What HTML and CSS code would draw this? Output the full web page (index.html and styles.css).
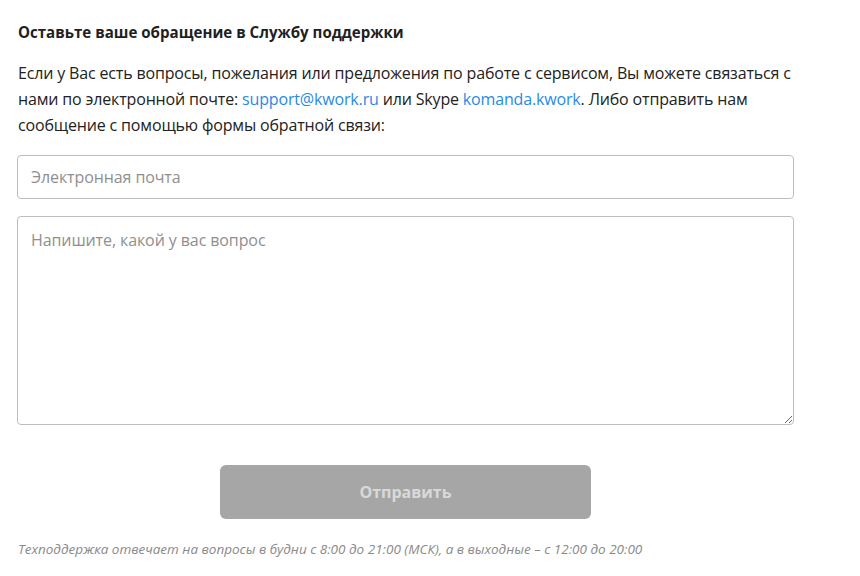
FILE: index.html
```
<!DOCTYPE html>
<html lang="ru">
<head>
<meta charset="utf-8">
<link rel="stylesheet" href="styles.css">
</head>
<body>
<div class="support">
  <h1 class="title">Оставьте ваше обращение в Службу поддержки</h1>
  <p class="intro">Если у Вас есть вопросы, пожелания или предложения по работе с сервисом, Вы можете связаться с нами по электронной почте: <a class="link" href="#">support@kwork.ru</a> или Skype <a class="link" href="#">komanda.kwork</a>. Либо отправить нам сообщение с помощью формы обратной связи:</p>
  <form class="form">
    <input class="field" type="text" placeholder="Электронная почта">
    <textarea class="field area" placeholder="Напишите, какой у вас вопрос"></textarea>
    <div class="actions">
      <button class="submit" type="button" disabled>Отправить</button>
    </div>
  </form>
  <p class="note">Техподдержка отвечает на вопросы в будни с 8:00 до 21:00 (МСК), а в выходные – с 12:00 до 20:00</p>
</div>
</body>
</html>
```
FILE: styles.css
```
html, body {
  margin: 0;
  padding: 0;
  background: #fff;
}
body {
  font-family: "Open Sans", "Noto Sans", sans-serif;
  color: #222;
}
.support {
  width: 777px;
  padding: 22px 0 0 17px;
}
.title {
  margin: 0 0 0 1px;
  font-size: 15.1px;
  line-height: 20px;
  font-weight: 700;
  color: #1f1f1f;
}
.intro {
  margin: 18px 0 0 1px;
  font-size: 16px;
  line-height: 26px;
  letter-spacing: -0.16px;
  color: #222;
}
.link {
  color: #2a8ae6;
  text-decoration: none;
}
.form {
  margin-top: 17px;
  display: flex;
  flex-direction: column;
  gap: 17px;
}
.field {
  box-sizing: border-box;
  width: 777px;
  height: 44px;
  margin: 0;
  border: 1px solid #bdbdbd;
  border-radius: 4px;
  padding: 0 13px;
  font-family: "Open Sans", "Noto Sans", sans-serif;
  font-size: 16px;
  letter-spacing: -0.1px;
  color: #222;
  background: #fff;
  outline: none;
}
.field::placeholder {
  color: #8f8f8f;
}
.area {
  height: 209px;
  padding: 12px 13px;
  line-height: 22px;
  resize: vertical;
}
.actions {
  display: flex;
  justify-content: center;
  margin-top: 23px;
}
.submit {
  width: 371px;
  height: 54px;
  border: none;
  border-radius: 6px;
  background: #a6a6a6;
  color: #d9d9d9;
  font-family: "Open Sans", "Noto Sans", sans-serif;
  font-size: 16px;
  font-weight: 700;
}
.note {
  margin: 21px 0 0 1px;
  font-size: 13.5px;
  line-height: 18px;
  font-style: italic;
  color: #8a8a8a;
}
```
